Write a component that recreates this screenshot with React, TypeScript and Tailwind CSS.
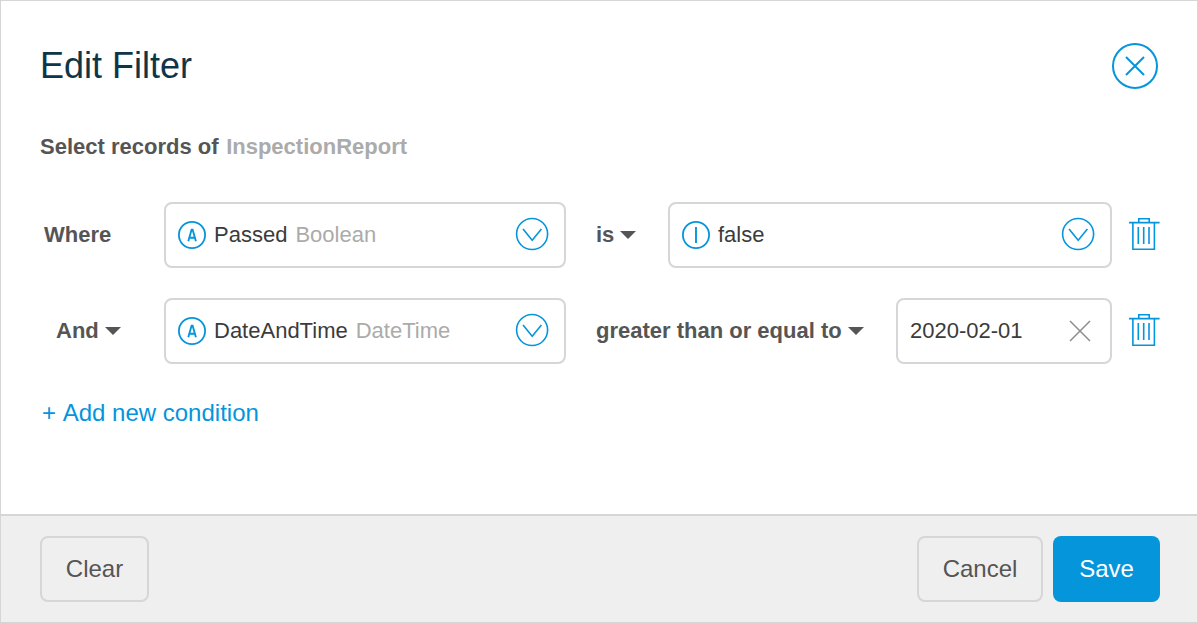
import type { ReactNode } from "react";

function AttributeIcon() {
  return (
    <svg width="28" height="28" viewBox="0 0 28 28" fill="none" stroke="#0595db" className="block shrink-0">
      <circle cx="14" cy="14" r="13.1" strokeWidth="1.8" />
      <path d="M10.3 20.3 L13.6 8.6 H14.6 L17.9 20.3 M11.3 16.7 H16.9" strokeWidth="1.9" />
    </svg>
  );
}

function ValueIcon() {
  return (
    <svg width="28" height="28" viewBox="0 0 28 28" fill="none" stroke="#0595db" className="block shrink-0">
      <circle cx="14" cy="14" r="13.1" strokeWidth="1.8" />
      <path d="M14 6 V22" strokeWidth="1.9" />
    </svg>
  );
}

function ChevronCircle() {
  return (
    <svg width="34" height="34" viewBox="0 0 34 34" fill="none" stroke="#0595db" strokeWidth="1.6" className="mb-0.5 block shrink-0">
      <circle cx="17.1" cy="17" r="15.5" />
      <path d="M8 12 L17.2 23.2 L26.4 12" />
    </svg>
  );
}

function TrashIcon() {
  return (
    <svg width="32" height="34" viewBox="0 0 32 34" fill="none" stroke="#0595db" strokeWidth="1.6" className="mb-0.5 block shrink-0">
      <path d="M1 5.6 H31.6 M10.8 5.6 V1.8 H21.2 V5.6 M4.9 5.6 V32.2 H26.4 V5.6" />
      <path d="M10.3 10 V27 M15.7 10 V27 M21 10 V27" />
    </svg>
  );
}

function Caret() {
  return (
    <svg width="16" height="8" viewBox="0 0 16 8" fill="#555555" className="block shrink-0">
      <path d="M0 0 H16 L8 8 Z" />
    </svg>
  );
}

function Field({ className, children }: { className: string; children: ReactNode }) {
  return (
    <div className={`flex h-[66px] shrink-0 items-center rounded-lg border-2 border-[#d6d6d6] bg-white pl-3 text-[22px] leading-[26px] text-[#3b3b3b] ${className}`}>
      {children}
    </div>
  );
}

export default function App() {
  return (
    <div className="flex h-[623px] w-[1198px] flex-col border border-[#d6d6d6] bg-white font-['Liberation_Sans',Arial,sans-serif] whitespace-nowrap">
      <header className="mt-[41px] flex h-12 items-center justify-between pr-[38px] pl-[39px]">
        <h1 className="text-[36px] leading-[42px] text-[#0f3549]">Edit Filter</h1>
        <button aria-label="Close">
          <svg width="48" height="48" viewBox="0 0 48 48" fill="none" stroke="#0595db" strokeWidth="2" className="block">
            <circle cx="24" cy="24" r="22" />
            <path d="M15 15 L33 33 M33 15 L15 33" />
          </svg>
        </button>
      </header>
      <main className="flex-1 pl-[39px] text-[22px] leading-[26px]">
        <p className="mt-11 font-bold text-[#555555]">
          Select records of <span className="ml-[1.5px] text-[#ababab]">InspectionReport</span>
        </p>
        <div className="mt-[42px] flex h-[66px] items-center">
          <div className="w-[124px] pl-1 font-bold text-[#555555]">Where</div>
          <Field className="w-[402px] pr-[15px]">
            <AttributeIcon />
            <span className="ml-2">Passed</span>
            <span className="ml-2 flex-1 text-[#ababab]">Boolean</span>
            <ChevronCircle />
          </Field>
          <button className="ml-[30px] flex w-[72px] items-center gap-1.5 font-bold text-[#555555]">
            is <Caret />
          </button>
          <Field className="w-[444px] pr-[15px]">
            <ValueIcon />
            <span className="ml-2 flex-1">false</span>
            <ChevronCircle />
          </Field>
          <button aria-label="Delete condition" className="ml-4"><TrashIcon /></button>
        </div>
        <div className="mt-[30px] flex h-[66px] items-center">
          <button className="flex w-[124px] items-center gap-1.5 pl-4 font-bold text-[#555555]">
            And <Caret />
          </button>
          <Field className="w-[402px] pr-[15px]">
            <AttributeIcon />
            <span className="ml-2">DateAndTime</span>
            <span className="ml-2 flex-1 text-[#ababab]">DateTime</span>
            <ChevronCircle />
          </Field>
          <button className="ml-[30px] flex w-[300px] items-center gap-1.5 font-bold text-[#555555]">
            greater than or equal to <Caret />
          </button>
          <Field className="w-[216px] justify-between pr-[18px]">
            <span>2020-02-01</span>
            <svg width="24" height="24" viewBox="0 0 24 24" fill="none" stroke="#8c8c8c" strokeWidth="1.5" className="block">
              <path d="M2 2 L22 22 M22 2 L2 22" />
            </svg>
          </Field>
          <button aria-label="Delete condition" className="ml-4"><TrashIcon /></button>
        </div>
        <button className="mt-[35px] block pl-0.5 text-[24px] leading-7 text-[#0595db] [font-kerning:none]">+ Add new condition</button>
      </main>
      <footer className="flex h-[108px] items-start border-t-2 border-[#d6d6d6] bg-[#efefef] pt-5 pr-[37px] pl-[39px] text-[24px]">
        <button className="h-[66px] w-[109px] rounded-lg border-2 border-[#d6d6d6] text-[#555555]">Clear</button>
        <button className="ml-auto h-[66px] w-[126px] rounded-lg border-2 border-[#d6d6d6] text-[#555555]">Cancel</button>
        <button className="ml-2.5 h-[66px] w-[107px] rounded-lg bg-[#0595db] text-white">Save</button>
      </footer>
    </div>
  );
}
